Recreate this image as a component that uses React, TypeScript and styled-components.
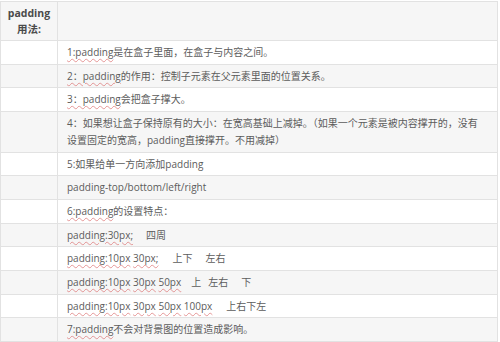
import React from "react";
import styled, { createGlobalStyle } from "styled-components";

const Global = createGlobalStyle`
  html, body { margin: 0; padding: 0; background: #ffffff; }
  body { font-family: "Open Sans", "Noto Sans CJK SC", sans-serif; }
`;

const Page = styled.div`
  padding-top: 1px;
  width: 500px;
  height: 342px;
  overflow: hidden;
`;

const Table = styled.table`
  width: 498px;
  border-collapse: collapse;
  table-layout: fixed;
  font-family: "Open Sans", "Noto Sans CJK SC", sans-serif;
  font-size: 10px;
  color: #5a5a5a;
`;

const Row = styled.tr`
  &:nth-child(odd) { background: #f6f6f6; }
  &:nth-child(even) { background: #ffffff; }
`;

const Cell = styled.td<{ $head?: boolean }>`
  border: 1px solid #e2e2e2;
  padding: ${(p) => (p.$head ? "3px 4px" : "3px 9px")};
  line-height: ${(p) => (p.$head ? "16px" : "16.7px")};
  vertical-align: middle;
  text-align: ${(p) => (p.$head ? "center" : "left")};
  font-weight: ${(p) => (p.$head ? 700 : 400)};
  font-size: ${(p) => (p.$head ? "10.5px" : "10px")};
  color: ${(p) => (p.$head ? "#4a4a4a" : "#5c5c5c")};
  white-space: nowrap;
`;

const LabelCol = styled.col`
  width: 57px;
`;

const Spell = styled.span`
  text-decoration: underline wavy rgba(215, 90, 90, 0.6);
  text-decoration-thickness: 1px;
  text-underline-offset: 2px;
`;

const Gap = styled.span<{ $w: number }>`
  display: inline-block;
  width: ${(p) => p.$w}px;
`;

const rows: React.ReactNode[] = [
  <><Spell>1:padding</Spell>是在盒子里面，在盒子与内容之间。</>,
  <><Spell>2：padding</Spell>的作用：控制子元素在父元素里面的位置关系。</>,
  <><Spell>3：padding</Spell>会把盒子撑大。</>,
  <>4：如果想让盒子保持原有的大小：在宽高基础上减掉。（如果一个元素是被内容撑开的，没有<br />设置固定的宽高，padding直接撑开。不用减掉）</>,
  <>5:如果给单一方向添加padding</>,
  <>padding-top/bottom/left/right</>,
  <><Spell>6:padding</Spell>的设置特点：</>,
  <><Spell>padding:30px;</Spell><Gap $w={13} />四周</>,
  <><Spell>padding:10px</Spell> <Spell>30px;</Spell><Gap $w={14} />上下<Gap $w={13} />左右</>,
  <><Spell>padding:10px</Spell> <Spell>30px</Spell> <Spell>50px</Spell><Gap $w={10} />上<Gap $w={7} />左右<Gap $w={13} />下</>,
  <><Spell>padding:10px</Spell> <Spell>30px</Spell> <Spell>50px</Spell> <Spell>100px</Spell><Gap $w={14} />上右下左</>,
  <><Spell>7:padding</Spell>不会对背景图的位置造成影响。</>,
];

export default function App() {
  return (
    <Page>
      <Global />
      <Table>
        <colgroup>
          <LabelCol />
          <col />
        </colgroup>
        <tbody>
          <Row>
            <Cell $head>
              padding
              <br />
              用法:
            </Cell>
            <Cell />
          </Row>
          {rows.map((content, i) => (
            <Row key={i}>
              <Cell />
              <Cell>{content}</Cell>
            </Row>
          ))}
        </tbody>
      </Table>
    </Page>
  );
}
